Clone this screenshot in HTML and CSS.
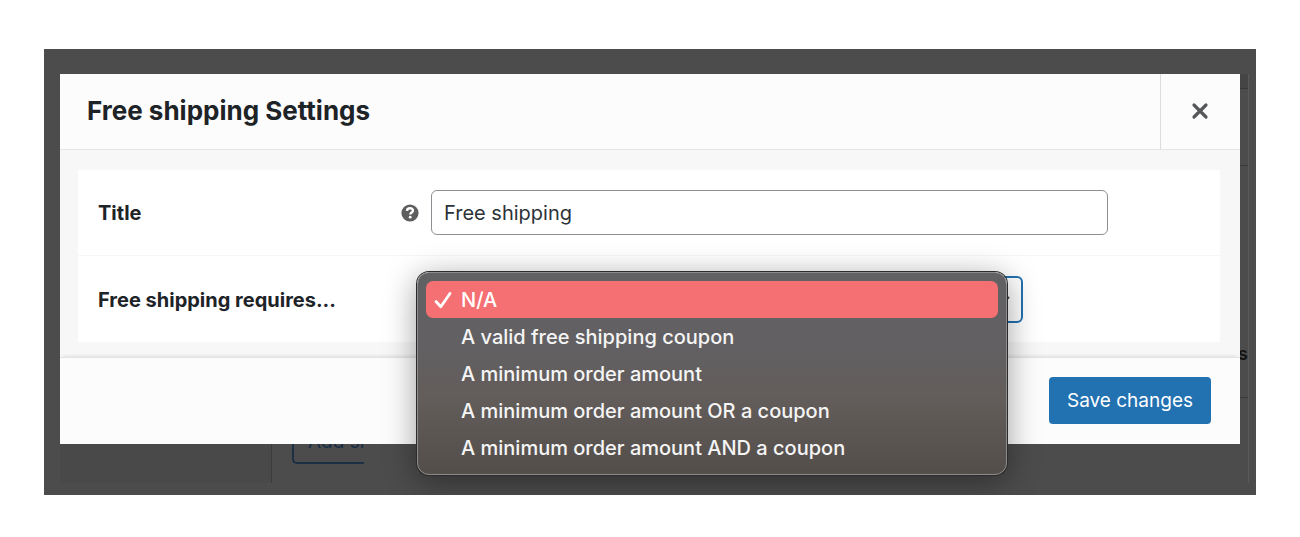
FILE: index.html
```
<!DOCTYPE html>
<html lang="en">
<head>
  <meta charset="UTF-8">
  <meta name="viewport" content="width=device-width, initial-scale=1.0">
  <title>Free shipping Settings</title>
  <link rel="stylesheet" href="styles.css">
</head>
<body>

<div class="backdrop">

  <!-- dimmed admin page behind the modal -->
  <div class="page" aria-hidden="true">
    <div class="page-side"></div>
    <div class="page-main">
      <button type="button" class="add-method" tabindex="-1">Add sl</button>
    </div>
    <div class="page-table">
      <div class="page-head"></div>
      <div class="page-row"></div>
      <div class="page-row tall">ss</div>
    </div>
  </div>

  <form class="modal" role="dialog" aria-labelledby="modal-title">
    <header class="modal-header">
      <h1 id="modal-title">Free shipping Settings</h1>
      <button type="button" class="close" aria-label="Close">
        <svg width="18" height="18" viewBox="0 0 18 18"><path d="M3 3l12 12M15 3L3 15" stroke="#555759" stroke-width="3.2" stroke-linecap="round"/></svg>
      </button>
    </header>

    <div class="modal-body">
      <div class="card">
        <div class="row">
          <label for="title">Title</label>
          <svg class="help" width="18" height="18" viewBox="0 0 18 18">
            <circle cx="9" cy="9" r="8.6" fill="#5e5e5e"/>
            <path d="M6 6.9C6.1 5 7.4 4.3 9.1 4.3c1.7 0 2.9.9 2.9 2.3 0 2-2.7 1.9-2.7 3.9" fill="none" stroke="#fff" stroke-width="2.4"/>
            <circle cx="9.2" cy="13.2" r="1.4" fill="#fff"/>
          </svg>
          <input type="text" id="title" value="Free shipping">
        </div>
        <div class="row">
          <label for="requires">Free shipping requires...</label>
          <div class="select-wrap">
            <select id="requires">
              <option>N/A</option>
              <option>A valid free shipping coupon</option>
              <option>A minimum order amount</option>
              <option>A minimum order amount OR a coupon</option>
              <option>A minimum order amount AND a coupon</option>
            </select>
            <ul class="menu" role="listbox" aria-label="Free shipping requires">
              <li class="selected" role="option" aria-selected="true">
                <svg class="check" width="18" height="18" viewBox="0 0 18 18"><path d="M2 10.5l4.8 5.3L16 2.5" fill="none" stroke="#fff" stroke-width="2.8" stroke-linecap="round" stroke-linejoin="round"/></svg>
                N/A
              </li>
              <li role="option">A valid free shipping coupon</li>
              <li role="option">A minimum order amount</li>
              <li role="option">A minimum order amount OR a coupon</li>
              <li role="option">A minimum order amount AND a coupon</li>
            </ul>
          </div>
        </div>
      </div>
    </div>

    <footer class="modal-footer">
      <button type="submit" class="save">Save changes</button>
    </footer>
  </form>

</div>

</body>
</html>
```
FILE: styles.css
```
* {
  box-sizing: border-box;
}

body {
  margin: 0;
  background: #fff;
  color: #1d2327;
  font-family: Inter, "Liberation Sans", sans-serif;
  font-size: 20px;
  line-height: 24px;
}

button, input, select {
  font: inherit;
  margin: 0;
}

.backdrop {
  display: grid;
  margin: 49px 44px 42px;
  padding: 25px 7px 12px 16px;
  overflow: hidden;
  background: #4c4c4c;
}

.page, .modal {
  grid-area: 1 / 1;
}

/* page behind */
.page {
  display: flex;
  min-width: 0;
}

.page-side {
  width: 212px;
  background: #494949;
  border-right: 1px solid #3c3c3c;
}

.page-main {
  flex: 1;
  display: flex;
  align-items: flex-end;
  padding: 0 20px;
}

.add-method {
  height: 44px;
  margin-bottom: 19px;
  padding: 0 0 0 14px;
  color: #172c45;
  background: none;
  border: 2px solid #1c2f44;
  border-right: 0;
  border-radius: 5px 0 0 5px;
  font-size: 19px;
}

.page-table {
  width: 60px;
  border-right: 1px solid #5a5a5a;
}

.page-head {
  height: 15px;
  background: #454545;
  border-bottom: 1px solid #383838;
}

.page-row {
  height: 77px;
  border-bottom: 1px solid #3a3a3a;
}

.page-row.tall {
  height: 232px;
  padding-top: 176px;
  color: #141414;
  font-size: 18px;
  font-weight: 600;
  text-align: right;
}

/* modal */
.modal {
  position: relative;
  margin: 0 9px 39px 0;
  background: #fcfcfc;
}

.modal-header {
  display: flex;
  height: 76px;
  align-items: center;
  justify-content: space-between;
  border-bottom: 1px solid #e5e5e5;
}

.modal-header h1 {
  margin: 0;
  padding: 0 0 2px 27px;
  font-size: 26px;
  font-weight: 700;
  line-height: 32px;
}

.close {
  display: flex;
  align-items: center;
  justify-content: center;
  width: 80px;
  height: 100%;
  padding: 0 1px 2px 0;
  background: none;
  border: 0;
  border-left: 1px solid #dcdcdc;
}

.modal-body {
  padding: 20px 20px 15px 18px;
  background: #f7f7f7;
}

.card {
  background: #fff;
}

.row {
  display: flex;
  align-items: center;
  padding: 20px;
}

.row + .row {
  padding-bottom: 19px;
  border-top: 1px solid #f7f7f7;
}

.row label {
  width: 303px;
  font-weight: 700;
}

.help {
  margin-right: 12px;
}

.row input {
  flex: 1;
  height: 45px;
  max-width: 677px;
  padding: 0 12px;
  color: #2c3338;
  background: #fff;
  border: 1px solid #8c8f94;
  border-radius: 6px;
}

.select-wrap {
  position: relative;
  flex: 1;
  max-width: 592px;
  margin-left: 30px;
}

.select-wrap select {
  display: block;
  width: 100%;
  height: 47px;
  padding: 0 12px;
  appearance: none;
  color: #2c3338;
  background: #fff url("data:image/svg+xml,%3Csvg xmlns='http://www.w3.org/2000/svg' width='16' height='10'%3E%3Cpath d='M2 2l6 6 6-6' fill='none' stroke='%23444' stroke-width='2'/%3E%3C/svg%3E") no-repeat right 10px center;
  border: 2px solid #2271b1;
  border-radius: 6px;
}

.menu {
  position: absolute;
  top: -4px;
  left: -14px;
  z-index: 1;
  width: calc(100% - 2px);
  margin: 0;
  padding: 8px;
  list-style: none;
  color: #f5f5f5;
  background: linear-gradient(#616062 0%, #626062 38%, #635d5b 60%, #544e4b 100%);
  border: 1px solid #8d8b8b;
  border-radius: 12px;
  box-shadow: 0 0 0 1px #2c2c2c, 0 6px 32px rgba(0, 0, 0, 0.4);
}

.menu li {
  display: flex;
  align-items: center;
  height: 37px;
  padding-left: 35px;
  font-weight: 500;
  white-space: nowrap;
}

.menu .selected {
  padding-left: 8px;
  color: #fff;
  background: #f57072;
  border-radius: 7px;
}

.check {
  margin-right: 9px;
}

.modal-footer {
  display: flex;
  justify-content: flex-end;
  padding: 19px 29px 20px;
  border-top: 1px solid #e3e3e3;
  box-shadow: 0 -3px 4px -3px rgba(0, 0, 0, 0.15);
}

.save {
  height: 47px;
  padding: 0 18px;
  color: #fff;
  background: #2271b1;
  border: 0;
  border-radius: 4px;
  font-size: 19px;
}
```
